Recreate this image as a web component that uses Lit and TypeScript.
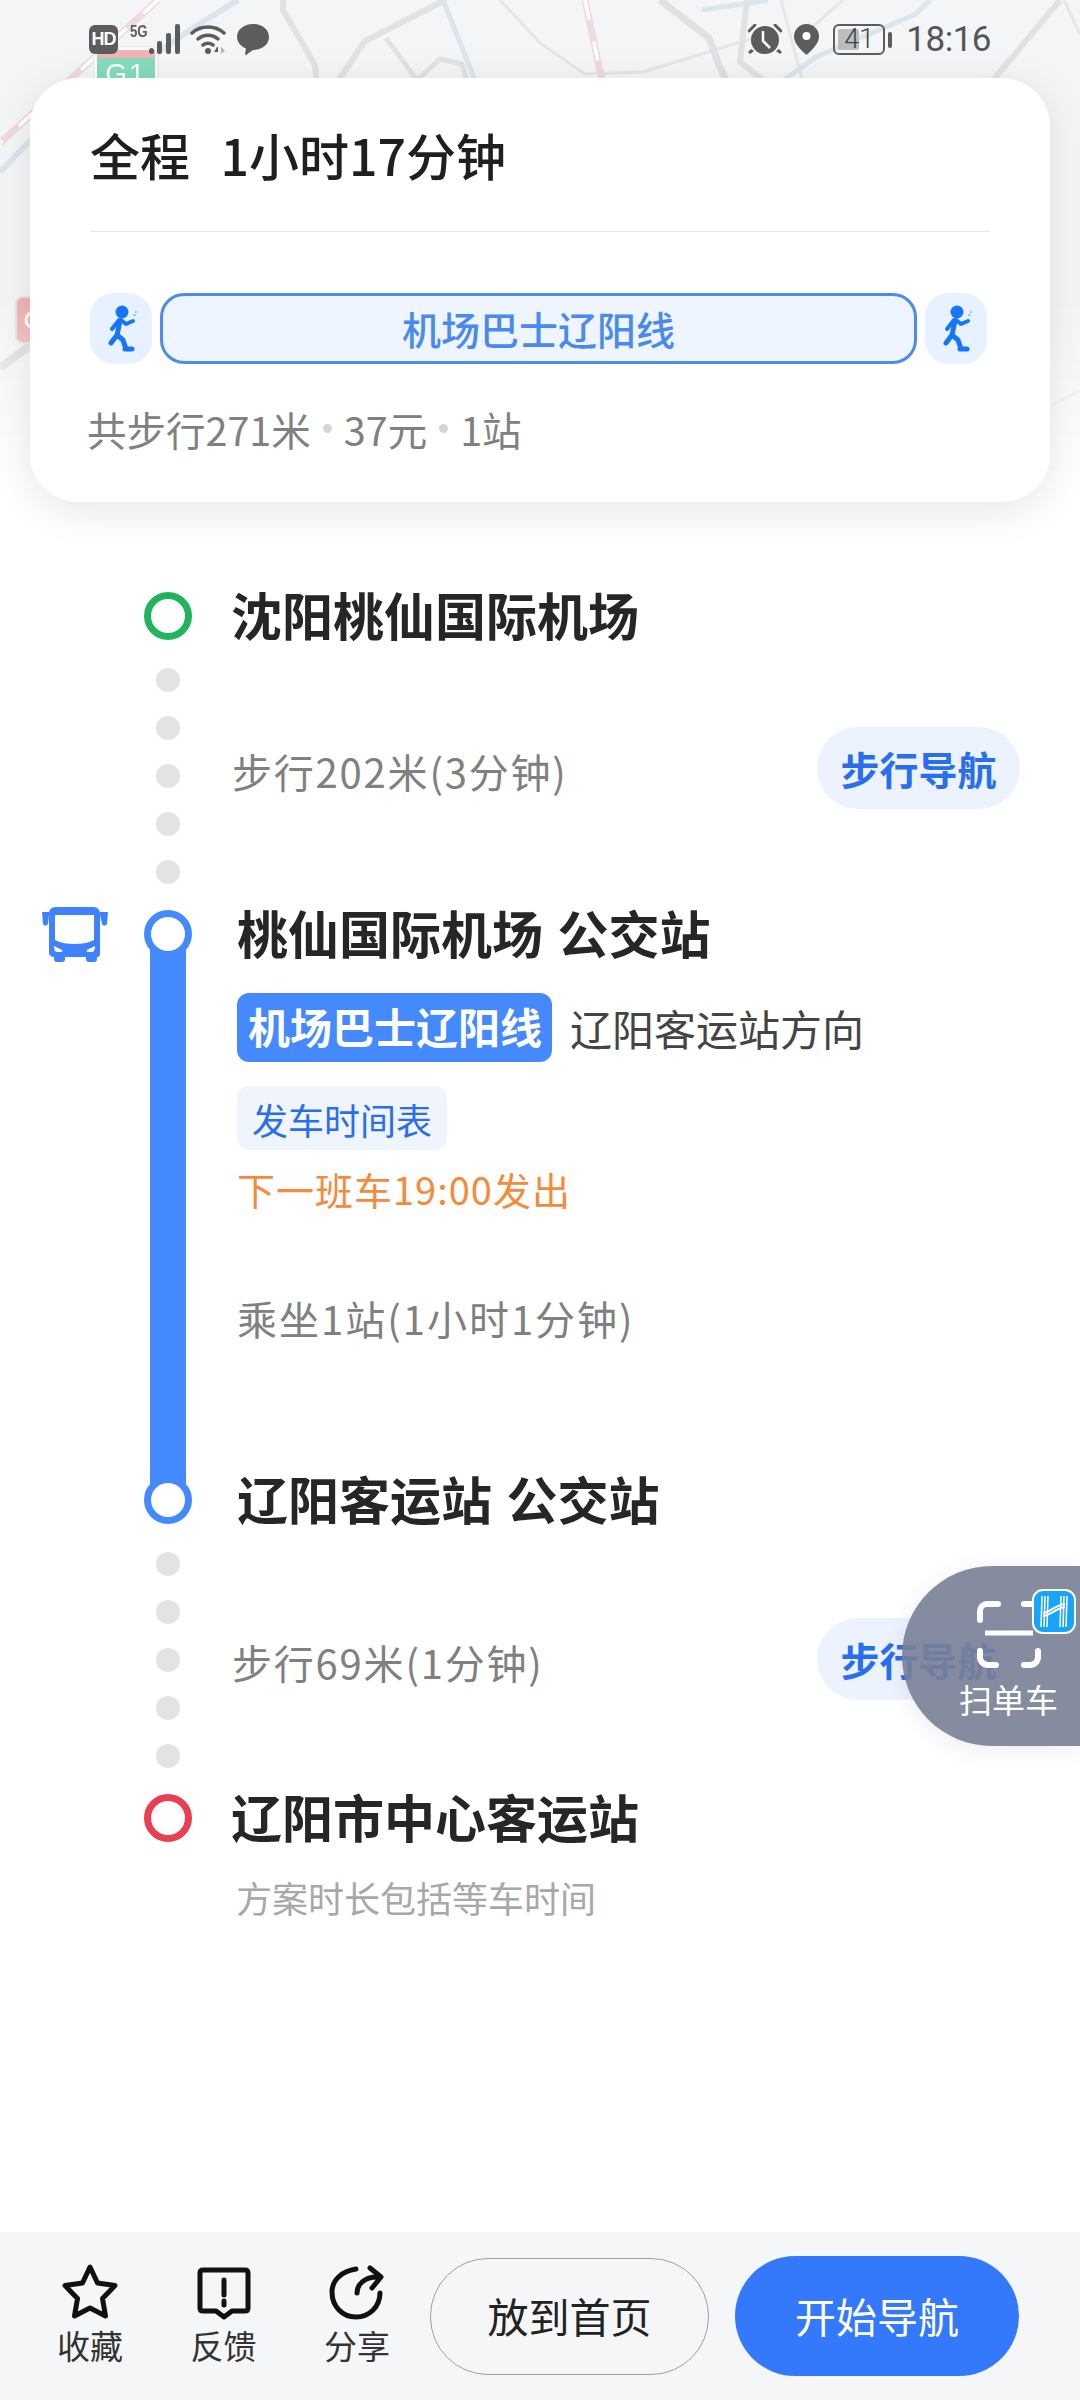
import { LitElement, css, html, svg } from 'lit';
import { customElement } from 'lit/decorators.js';

// road polylines on the map behind the header: [points, colour, width]
const ROADS: [string, string, number][] = [
  ['283,0 283,10 315,65 319,110', '#e0e2e5', 6],
  ['445,0 379,34 365,41 325,100', '#e0e2e5', 6],
  ['386,38 417,80 440,59 462,64 472,100', '#e0e2e5', 5],
  ['443,0 479,90', '#dbe5ee', 5],
  ['500,0 540,43 585,74 643,72 705,53 760,36', '#e4e6e9', 3],
  ['660,0 678,14 709,38 719,65 735,100', '#dfe1e4', 7],
  ['702,10 768,0', '#dbe5ee', 5],
  ['747,0 740,62 775,90', '#e0e2e5', 6],
  ['781,0 805,90', '#e4e6e9', 3],
  ['843,0 800,38', '#e4e6e9', 3],
  ['930,0 916,14 816,57 770,90', '#dbe5ee', 5],
  ['1060,0 985,90', '#e0e2e5', 6],
  ['1064,0 1080,34', '#e4e6e9', 3],
  ['1080,390 1040,412', '#e4e6e9', 3],
  ['40,338 0,368', '#d9dbde', 8],
  ['238,0 193,28 28,143 0,172', '#dbe5ee', 6],
];
const RAILS = ['158,0 0,143', '585,0 604,90'];

const walker = html`<svg class="walker" viewBox="0 0 62 71" fill="none">
  <circle cx="32" cy="19" r="6.500" fill="#1676fa"></circle>
  <path d="M30 28 27 42 21 50M27 42 33 47 36 56M42 56H35" stroke="#1676fa" stroke-width="5" stroke-linecap="round" stroke-linejoin="round"></path>
  <path d="M29 27 22 36M31 27 36 31 43 28" stroke="#1676fa" stroke-width="4" stroke-linecap="round" stroke-linejoin="round"></path>
  <path d="M43 22h3M45 19h2" stroke="#8db8fb" stroke-width="1.500"></path>
</svg>`;

const busIcon = html`<svg class="bus" viewBox="0 0 66 58">
  <path fill-rule="evenodd" fill="#3f82ff" d="M14 2h37c5 0 7 3 7 7v39c0 3-1 4-3 4v2c0 2-1 3-3 3h-5c-2 0-3-1-3-3v-2H23v2c0 2-1 3-3 3h-5c-2 0-3-1-3-3v-2c-3 0-5-2-5-4V9c0-4 2-7 7-7ZM13 10v25c6 3 13 4 19.500 4S46 38 52 35V10Z"></path>
  <path fill="#3f82ff" d="M0 7h7v3l-1 9c-1 2-4 2-5 0ZM58 7h8l-1 12c-1 2-4 2-5 0l-2-9Z"></path>
  <path fill="#fff" d="M12 41l8 4c1 1 0 2-1 2h-4c-2 0-3-3-3-6ZM53 41l-8 4c-1 1 0 2 1 2h4c2 0 3-3 3-6Z"></path>
</svg>`;

@customElement('app-root')
export class AppRoot extends LitElement {
  static styles = css`
    :host {
      display: flex;
      flex-direction: column;
      position: relative;
      width: 1080px;
      height: 2400px;
      overflow: hidden;
      background: #fff;
      font-family: 'Noto Sans CJK SC', 'Liberation Sans', sans-serif;
      color: #262626;
    }
    .map {
      position: absolute;
      left: 0;
      top: 0;
      width: 1080px;
      height: 520px;
      background: #f4f5f7;
      -webkit-mask-image: linear-gradient(#000 300px, transparent 480px);
      mask-image: linear-gradient(#000 300px, transparent 480px);
    }
    .head {
      position: relative;
      flex: none;
    }
    .status {
      height: 78px;
      box-sizing: border-box;
      padding: 24px 89px 0 89px;
      display: flex;
      justify-content: space-between;
      align-items: flex-start;
    }
    .status-left,
    .status-right {
      display: flex;
      align-items: flex-start;
    }
    .hd {
      width: 29px;
      height: 29px;
      margin-top: 1px;
      border-radius: 6px;
      background: #5c5c5c;
      color: #fff;
      font: 700 18px/29px 'Liberation Sans', sans-serif;
      text-align: center;
      letter-spacing: -1px;
    }
    .five-g {
      width: 17px;
      margin-left: 12px;
      color: #5c5c5c;
      font: 700 17px/15px 'Liberation Sans', sans-serif;
      transform: scaleX(0.78);
      transform-origin: left;
    }
    .sig {
      width: 33px;
      height: 30px;
      margin-left: 1px;
    }
    .wifi {
      width: 38px;
      height: 30px;
      margin-left: 9px;
    }
    .msg {
      width: 32px;
      height: 31px;
      margin-left: 9px;
    }
    .alarm {
      width: 34px;
      height: 31px;
    }
    .pin {
      width: 25px;
      height: 31px;
      margin-left: 12px;
    }
    .battery {
      position: relative;
      width: 52px;
      height: 31px;
      box-sizing: border-box;
      margin-left: 14px;
      border: 2px solid #5c5c5c;
      border-radius: 6px;
      color: #444;
      font: 300 27px/27px 'Roboto', sans-serif;
      text-align: center;
    }
    .battery i {
      position: absolute;
      left: 3px;
      top: 3px;
      width: 21px;
      height: 21px;
      background: #bcbcbc;
      border-radius: 2px;
    }
    .battery span {
      position: relative;
    }
    .nub {
      width: 4px;
      height: 16px;
      margin: 8px 0 0 3px;
      border-radius: 2px;
      background: #5c5c5c;
    }
    .time {
      margin: -4px 0 0 14px;
      font: 400 35px/40px 'Roboto', sans-serif;
      letter-spacing: -0.500px;
      color: #555;
    }
    .card {
      margin: 0 30px;
      height: 424px;
      box-sizing: border-box;
      padding: 0 60px;
      background: #fff;
      border-radius: 48px;
      box-shadow: 0 8px 40px rgba(0, 0, 0, 0.1);
    }
    .title {
      height: 151px;
      display: flex;
      align-items: center;
      font-size: 50px;
      font-weight: 500;
      color: #1f1f1f;
      white-space: pre;
      word-spacing: 4px;
      margin-bottom: 2px;
    }
    .rule {
      height: 1px;
      background: #e6e6e6;
    }
    .route {
      display: flex;
      gap: 8px;
      height: 71px;
      width: 897px;
      margin-top: 61px;
    }
    .walk-chip {
      flex: none;
      width: 62px;
      border-radius: 24px;
      background: #e8f1ff;
    }
    .walker {
      display: block;
      width: 62px;
      height: 71px;
    }
    .line-chip {
      flex: 1;
      box-sizing: border-box;
      border: 3px solid #4c8bf0;
      border-radius: 24px;
      background: #eef5ff;
      color: #4a8af0;
      font-size: 39px;
      font-weight: 500;
      line-height: 65px;
      text-align: center;
    }
    .summary {
      display: flex;
      align-items: center;
      height: 46px;
      margin: 41px 0 0 -3px;
      font-size: 39.500px;
      color: #808080;
    }
    .summary i {
      width: 9px;
      height: 9px;
      margin: 0 12px;
      border-radius: 50%;
      background: #d4d6d8;
    }
    .plan {
      flex: 1;
      padding-top: 90px;
    }
    .seg {
      display: grid;
      grid-template-columns: 144px 48px 1fr;
      padding-right: 60px;
    }
    .ring {
      width: 48px;
      height: 48px;
      box-sizing: border-box;
      border-radius: 50%;
      border: 7.500px solid #4589ff;
      background: #fff;
      position: relative;
    }
    .ring.green {
      border-color: #22b35e;
    }
    .ring.red {
      border-color: #e83f52;
    }
    .name {
      height: 48px;
      font-size: 51px;
      line-height: 44px;
      font-weight: 700;
      padding-left: 39px;
      white-space: pre;
    }
    .name.ride {
      padding-left: 45px;
      word-spacing: 3px;
    }
    .dots {
      display: flex;
      flex-direction: column;
      align-items: center;
      gap: 24px;
      height: 270px;
      box-sizing: border-box;
      padding-top: 28px;
    }
    .dots i {
      width: 24px;
      height: 24px;
      border-radius: 50%;
      background: #e3e3e3;
    }
    .walk-row {
      display: flex;
      justify-content: space-between;
      align-items: center;
      height: 82px;
      padding-left: 40px;
      font-size: 40px;
      color: #808080;
    }
    .walk-row.first {
      margin-top: 87px;
    }
    .walk-row.second {
      margin-top: 94px;
    }
    .walk-row span {
      margin-top: 6px;
      letter-spacing: 1.800px;
    }
    .walk-btn {
      width: 203px;
      height: 82px;
      border-radius: 41px;
      background: #edf3fe;
      color: #2a6ef0;
      font-size: 39px;
      font-weight: 700;
      line-height: 82px;
      letter-spacing: 0;
      text-align: center;
    }
    .bus {
      display: block;
      width: 66px;
      height: 58px;
      margin: -5px 0 0 42px;
    }
    .rail {
      display: flex;
      flex-direction: column;
      align-items: center;
    }
    .bar {
      flex: 1;
      width: 36px;
      margin: -8px 0;
      background: #4589ff;
    }
    .ride-body {
      display: flex;
      flex-direction: column;
      height: 614px;
      align-items: flex-start;
    }
    .ride-body > div:not(.name) {
      margin-left: 45px;
    }
    .tag-row {
      display: flex;
      align-items: center;
      height: 69px;
      margin-top: 35px;
      font-size: 42px;
      line-height: 66px;
      color: #444;
    }
    .tag {
      height: 69px;
      box-sizing: border-box;
      padding: 0 10px 0 11px;
      margin-right: 18px;
      border-radius: 12px;
      background: #4589ff;
      color: #fff;
      font-weight: 700;
      line-height: 65px;
    }
    .chip {
      height: 64px;
      box-sizing: border-box;
      padding: 0 15px;
      margin-top: 24px;
      border-radius: 12px;
      background: #eff4fd;
      color: #2a6ef0;
      font-size: 36px;
      line-height: 67px;
    }
    .next {
      margin-top: 13px;
      font-size: 38px;
      letter-spacing: 1px;
      line-height: 52px;
      color: #f58a3a;
    }
    .dur {
      margin-top: 75px;
      font-size: 40px;
      letter-spacing: 2px;
      line-height: 56px;
      color: #808080;
    }
    .name.end {
      margin-top: auto;
    }
    .note {
      padding: 28px 0 0 192px;
      margin-left: 44px;
      font-size: 36px;
      line-height: 54px;
      color: #a8a8a8;
    }
    .foot {
      flex: none;
      display: flex;
      align-items: center;
      height: 168px;
      padding-left: 40px;
      background: #f5f6f8;
    }
    .act {
      width: 100px;
      margin-right: 33.500px;
      text-align: center;
      font-size: 33px;
      line-height: 40px;
      color: #333;
    }
    .act.last {
      margin-right: 23px;
    }
    .act svg {
      display: block;
      width: 60px;
      height: 58px;
      margin: -4px auto 4px;
    }
    .pill {
      box-sizing: border-box;
      font-size: 41px;
      text-align: center;
    }
    .pill.ghost {
      width: 279px;
      height: 117px;
      line-height: 113px;
      border: 1.500px solid #a0a0a0;
      border-radius: 58px;
      color: #222;
    }
    .pill.go {
      width: 284px;
      height: 120px;
      line-height: 118px;
      margin-left: 26px;
      border-radius: 60px;
      background: #3478fc;
      color: #fff;
    }
    .scan {
      position: absolute;
      right: 0;
      top: 1566px;
      width: 178px;
      height: 180px;
      border-radius: 90px 0 0 90px;
      background: rgba(120, 128, 150, 0.9);
      box-shadow: 0 4px 24px rgba(0, 0, 0, 0.08);
      color: #fff;
      font-size: 33px;
    }
    .scan svg {
      position: absolute;
      left: 70px;
      top: 20px;
      width: 108px;
      height: 88px;
    }
    .scan span {
      position: absolute;
      left: 57px;
      top: 110px;
      line-height: 46px;
    }
  `;

  private _map() {
    return html`<svg class="map" viewBox="0 0 1080 520" fill="none">
      ${ROADS.map(([p, c, w]) => svg`<polyline points=${p} stroke=${c} stroke-width=${w} stroke-linejoin="round"></polyline>`)}
      ${RAILS.map(
        (p) => svg`<polyline points=${p} stroke="#f0dadc" stroke-width="7"></polyline>
          <polyline points=${p} stroke="#fff" stroke-width="3.500" stroke-dasharray="20 22"></polyline>`,
      )}
      <rect x="94" y="47" width="64" height="50" fill="#fff" stroke="#e3e8e6" stroke-width="1"></rect>
      <rect x="97" y="50" width="58" height="9" fill="#f2b3b6"></rect>
      <rect x="97" y="58" width="58" height="40" fill="#85dcbd"></rect>
      <text x="126" y="83" fill="#fff" text-anchor="middle" font-family="Liberation Sans" font-size="28" letter-spacing="2">G1</text>
      <rect x="16" y="297" width="28" height="46" rx="7" fill="#f4b2b3" stroke="#e3e6e6" stroke-width="2"></rect>
      <circle cx="34" cy="320" r="8" stroke="#fff" stroke-width="3"></circle>
    </svg>`;
  }

  private _status() {
    return html`<div class="status">
      <div class="status-left">
        <div class="hd">HD</div>
        <div class="five-g">5G</div>
        <svg class="sig" viewBox="0 0 33 30" fill="#5c5c5c">
          <rect x="1" y="24" width="5" height="6" rx="2.500"></rect>
          <rect x="9" y="17" width="5" height="13" rx="2"></rect>
          <rect x="18" y="9" width="5" height="21" rx="2"></rect>
          <rect x="27" y="0" width="5" height="30" rx="2"></rect>
        </svg>
        <svg class="wifi" viewBox="0 0 38 30" fill="none" stroke="#5c5c5c" stroke-width="3.500" stroke-linecap="round">
          <path d="M2 9C11 1 25 1 34 9M8 15c6-5 14-5 20 0M13 21c3-2 7-2 10 0"></path>
          <circle cx="18" cy="27" r="3" fill="#5c5c5c" stroke="none"></circle>
          <path d="M27 23l-3 5h4v-5z" stroke="none" fill="#5c5c5c"></path>
          <path d="M31 23v7l4-3.500z" stroke="none" fill="#b5b5b5"></path>
        </svg>
        <svg class="msg" viewBox="0 0 32 31" fill="#5c5c5c">
          <path d="M16 0c9 0 16 5.500 16 13s-7 13-16 13l-7 5c-1 0-1-1-1-1l1-5.500C4 22.500 0 18 0 13 0 5.500 7 0 16 0Z"></path>
        </svg>
      </div>
      <div class="status-right">
        <svg class="alarm" viewBox="0 0 34 31">
          <path fill="#5c5c5c" d="M3 25 0 28l2 2 4-3ZM31 25l3 3-2 2-4-3Z"></path>
          <circle cx="17" cy="16" r="14" fill="#5c5c5c"></circle>
          <path d="M15 7v10l7 7" fill="none" stroke="#fff" stroke-width="2.500"></path>
          <path d="M1 7 7 1M27 1l6 6" stroke="#5c5c5c" stroke-width="3" stroke-linecap="round"></path>
        </svg>
        <svg class="pin" viewBox="0 0 25 31">
          <path fill="#5c5c5c" d="M12.500 0C19.500 0 25 5.500 25 12.500 25 20 17 27 12.500 31 8 27 0 20 0 12.500 0 5.500 5.500 0 12.500 0Z"></path>
          <circle cx="12.500" cy="12" r="4" fill="#fff"></circle>
        </svg>
        <div class="battery"><i></i><span>41</span></div>
        <div class="nub"></div>
        <div class="time">18:16</div>
      </div>
    </div>`;
  }

  private _walk(text: string, cls: string) {
    return html`<div class="seg">
      <div></div>
      <div class="dots"><i></i><i></i><i></i><i></i><i></i></div>
      <div class="walk-row ${cls}"><span>${text}</span><div class="walk-btn">步行导航</div></div>
    </div>`;
  }

  render() {
    return html`
      ${this._map()}
      <div class="head">
        ${this._status()}
        <div class="card">
          <div class="title">全程  1小时17分钟</div>
          <div class="rule"></div>
          <div class="route">
            <div class="walk-chip">${walker}</div>
            <div class="line-chip">机场巴士辽阳线</div>
            <div class="walk-chip">${walker}</div>
          </div>
          <div class="summary">共步行271米<i></i>37元<i></i>1站</div>
        </div>
      </div>

      <div class="plan">
        <div class="seg">
          <div></div>
          <div class="ring green"></div>
          <div class="name">沈阳桃仙国际机场</div>
        </div>
        ${this._walk('步行202米(3分钟)', 'first')}
        <div class="seg">
          <div>${busIcon}</div>
          <div class="rail">
            <div class="ring"></div>
            <div class="bar"></div>
            <div class="ring"></div>
          </div>
          <div class="ride-body">
            <div class="name ride">桃仙国际机场 公交站</div>
            <div class="tag-row"><span class="tag">机场巴士辽阳线</span>辽阳客运站方向</div>
            <div class="chip">发车时间表</div>
            <div class="next">下一班车19:00发出</div>
            <div class="dur">乘坐1站(1小时1分钟)</div>
            <div class="name ride end">辽阳客运站 公交站</div>
          </div>
        </div>
        ${this._walk('步行69米(1分钟)', 'second')}
        <div class="seg">
          <div></div>
          <div class="ring red"></div>
          <div class="name">辽阳市中心客运站</div>
        </div>
        <div class="note">方案时长包括等车时间</div>
      </div>

      <div class="foot">
        <div class="act">
          <svg viewBox="0 0 60 58" fill="none" stroke="#111" stroke-width="5" stroke-linejoin="round">
            <path d="M30 4 37.500 20 55 22.500 42.500 35.500 45.500 53 30 45 14.500 53 17.500 35.500 5 22.500 22.500 20Z"></path>
          </svg>
          收藏
        </div>
        <div class="act">
          <svg viewBox="0 0 60 58" fill="none" stroke="#111" stroke-width="5" stroke-linejoin="round">
            <path d="M9 7h42c2 0 3 1 3 3v35c0 2-1 3-3 3H38l-8 6-8-6H9c-2 0-3-1-3-3V10c0-2 1-3 3-3Z"></path>
            <path d="M30 17v15M30 38v4" stroke-linecap="round"></path>
          </svg>
          反馈
        </div>
        <div class="act last">
          <svg viewBox="0 0 60 58" fill="none" stroke="#111" stroke-width="5" stroke-linecap="round" stroke-linejoin="round">
            <path d="M29 6C15 8 5 17 5 29c0 14 10 25 24 25 13 0 24-10 24-24"></path>
            <path d="M30 30c0-9 8-16 20-16M43 5l11 9-9 11"></path>
          </svg>
          分享
        </div>
        <div class="pill ghost">放到首页</div>
        <div class="pill go">开始导航</div>
      </div>

      <div class="scan">
        <svg viewBox="0 0 108 88" fill="none">
          <g stroke="#fff" stroke-width="6" stroke-linecap="round">
            <path d="M26 18H15a7 7 0 0 0-7 7v9M52 18h8M8 65v6a8 8 0 0 0 8 8h8M52 79h6a8 8 0 0 0 8-8v-6"></path>
            <path d="M13 47h48" stroke-width="5" stroke-linecap="butt"></path>
          </g>
          <rect x="61" y="4" width="42" height="43" rx="10" fill="#18a4fa" stroke="#fff" stroke-width="2"></rect>
          <g stroke="#fff" stroke-width="1.500" fill="none">
            <path d="M70 10 69 41M73 10 72 41M76 10 75 41M89 10 88 41M92 10 91 41M95 10 94 41"></path>
            <path d="M71 30C78 30 84 22 93 21M71 27C77 27 83 19 93 18" stroke-width="2"></path>
          </g>
        </svg>
        <span>扫单车</span>
      </div>
    `;
  }
}

declare global {
  interface HTMLElementTagNameMap {
    'app-root': AppRoot;
  }
}
